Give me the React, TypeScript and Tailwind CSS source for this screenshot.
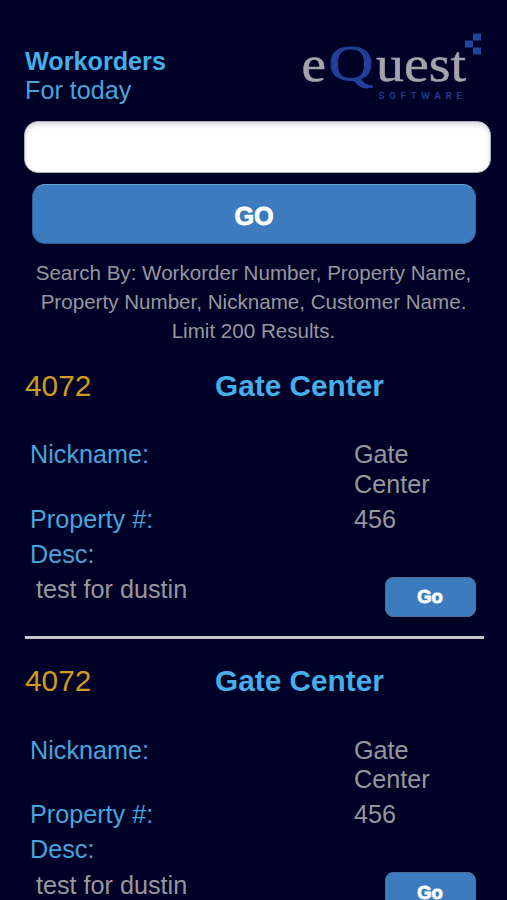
import React from "react";

const workorders = [
  { id: 1, number: "4072", name: "Gate Center", nickname: "Gate Center", property: "456", desc: "test for dustin" },
  { id: 2, number: "4072", name: "Gate Center", nickname: "Gate Center", property: "456", desc: "test for dustin" },
];

function Logo() {
  return (
    <svg width="182" height="72" viewBox="300 31 182 72" role="img" aria-label="eQuest Software">
      <g fontFamily="'Liberation Serif', serif">
        <text x="301.5" y="81" fontSize="51" fill="#a5a4ae" stroke="#a5a4ae" strokeWidth="0.5" textLength="24.5" lengthAdjust="spacingAndGlyphs">e</text>
        <text x="328.5" y="79.5" fontSize="51" fill="#21409a" stroke="#21409a" strokeWidth="0.8" textLength="45" lengthAdjust="spacingAndGlyphs">Q</text>
        <text x="376" y="81" fontSize="51" fill="#a5a4ae" stroke="#a5a4ae" strokeWidth="0.5" textLength="90" lengthAdjust="spacingAndGlyphs">uest</text>
      </g>
      <text x="378.5" y="98.5" fontSize="9.8" fontWeight="bold" fontFamily="Roboto, sans-serif" fill="#1d3788" letterSpacing="4.6">SOFTWARE</text>
      {/* pixel mark */}
      <g fill="#21459c">
        <rect x="473" y="33.5" width="8" height="7" />
        <rect x="465" y="40.5" width="8" height="7" />
        <rect x="473" y="47.5" width="8" height="7" />
      </g>
    </svg>
  );
}

function Workorder({ order }: { order: (typeof workorders)[number] }) {
  return (
    <section className="h-[295.4px]">
      <div className="flex h-[34px] text-[29.8px] leading-[34px]">
        <div className="w-[190px] text-[#d19a1e]">{order.number}</div>
        <h2 className="font-bold text-[#46aee8]">{order.name}</h2>
      </div>

      <div className="mt-[37.8px] grid grid-cols-[324px_100px] gap-y-[6px] pl-[5px]">
        <div className="text-[#46a5dc]">Nickname:</div>
        <div>{order.nickname}</div>
        <div className="text-[#46a5dc]">Property #:</div>
        <div>{order.property}</div>
        <div className="text-[#46a5dc]">Desc:</div>
      </div>

      <div className="mt-[6px] flex h-[48px] w-[450.5px] items-start justify-between pl-[11px]">
        <div>{order.desc}</div>
        <button className="mt-[1.5px] h-[40px] w-[91px] rounded-[8px] border border-[#526c99] bg-[#3b7bbe] text-[18.5px] font-bold text-white [-webkit-text-stroke:0.9px_white]">
          Go
        </button>
      </div>
      <hr className="mt-[12.8px] h-[3px] w-[459px] border-0 bg-[#c8c6cb]" />
    </section>
  );
}

export default function App() {
  return (
    <main className="h-[900px] w-full overflow-hidden bg-[#000126] pl-[25px] pt-[31px] font-['Liberation_Sans',Arial,sans-serif] text-[25.2px] leading-[29.2px] text-[#98979f]">
      <header className="flex h-[90px]">
        <div className="w-[275px] pt-[16px] text-[#46a5dc]">
          <h1 className="font-bold text-[#46aee8]">Workorders</h1>
          <p>For today</p>
        </div>
        <Logo />
      </header>

      <input
        type="text"
        aria-label="Search"
        className="-ml-px block h-[52px] w-[467px] rounded-[14px] border border-[#aaa9b4] bg-white px-4 text-black shadow-[inset_0_3px_5px_#dcdbe5] outline-none"
      />
      <button className="ml-[7px] mt-[11px] block h-[60px] w-[444px] rounded-[13px] border border-[#315f98] border-t-[#68a0d3] bg-[#3b7bbe] pt-[5px] font-bold text-white [-webkit-text-stroke:0.8px_white]">
        GO
      </button>

      <p className="mb-[23px] mt-[14px] w-[457px] text-center text-[20.6px]">
        Search By: Workorder Number, Property Name,
        <br />
        Property Number, Nickname, Customer Name.
        <br />
        Limit 200 Results.
      </p>

      {workorders.map((order) => (
        <Workorder key={order.id} order={order} />
      ))}
    </main>
  );
}
